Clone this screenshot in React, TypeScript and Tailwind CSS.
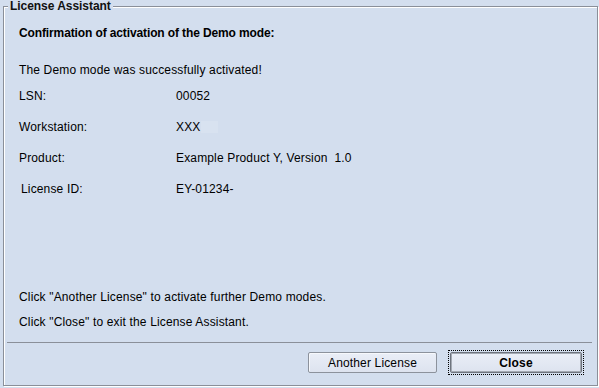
import React from "react";

const rows: { label: string; value: React.ReactNode; indent?: boolean }[] = [
  { label: "LSN:", value: "00052" },
  {
    label: "Workstation:",
    value: (
      <span className="flex items-center">
        <span>XXX</span>
        <span className="ml-[1px] inline-block h-[12px] w-[17px] bg-[#d8e2f0]" />
      </span>
    ),
  },
  { label: "Product:", value: "Example Product Y, Version  1.0" },
  { label: "License ID:", value: "EY-01234-", indent: true },
];

export default function App() {
  return (
    <div
      className="w-[599px] h-[388px] bg-[#d3deee] text-[12px] leading-[14px] tracking-[0.15px] text-black overflow-hidden"
      style={{ fontFamily: '"Liberation Sans", Arial, sans-serif' }}
    >
      <fieldset className="ml-[3px] w-[595px] h-[386px] border border-[#8a8f99] shadow-[inset_1px_1px_0_#ffffff,1px_1px_0_#ffffff]">
        <legend className="ml-[4px] pl-[2px] pr-[2px] bg-[#d3deee] font-bold leading-[13px] text-[12px] tracking-[-0.05px] text-[#111]">
          License Assistant
        </legend>
        <div className="flex h-[372px] flex-col">
          <div className="mt-[13px] pl-[15px] font-bold tracking-[-0.12px] whitespace-pre">
            Confirmation of activation of the Demo mode:
          </div>
          <div className="mt-[23px] pl-[15px]">The Demo mode was successfully activated!</div>
          <div className="mt-[12px] flex flex-col gap-[17px]">
            {rows.map((r) => (
              <div key={r.label} className="flex">
                <div className={`w-[172px] ${r.indent ? "pl-[17px]" : "pl-[15px]"}`}>{r.label}</div>
                <div className="whitespace-pre">{r.value}</div>
              </div>
            ))}
          </div>
          <div className="mt-auto flex flex-col">
            <div className="pl-[15px] whitespace-pre">
              Click "Another License" to activate further Demo modes.
            </div>
            <div className="mt-[11px] pl-[15px] whitespace-pre">
              Click "Close" to exit the License Assistant.
            </div>
            <div className="mt-[13px] ml-[3px] mr-[5px] h-px bg-[#8a8f99]" />
            <div className="mt-[7px] mb-[10px] mr-[13px] flex items-center justify-end gap-[11px]">
              <button className="h-[21px] w-[129px] rounded-[2px] border border-[#8c929c] bg-gradient-to-b from-[#eaeef7] to-[#dde3ef] text-[12px] leading-[14px] text-black shadow-[inset_1px_1px_0_#f6f8fc]">
                Another License
              </button>
              <div className="h-[25px] w-[136px] border border-dotted border-black p-px">
                <button className="h-[21px] w-[132px] rounded-[2px] border border-[#6e747e] bg-gradient-to-b from-[#eaeef7] to-[#dde3ef] text-[12px] font-bold leading-[14px] text-black shadow-[inset_0_0_0_1px_#a3a9b3]">
                  Close
                </button>
              </div>
            </div>
          </div>
        </div>
      </fieldset>
    </div>
  );
}
